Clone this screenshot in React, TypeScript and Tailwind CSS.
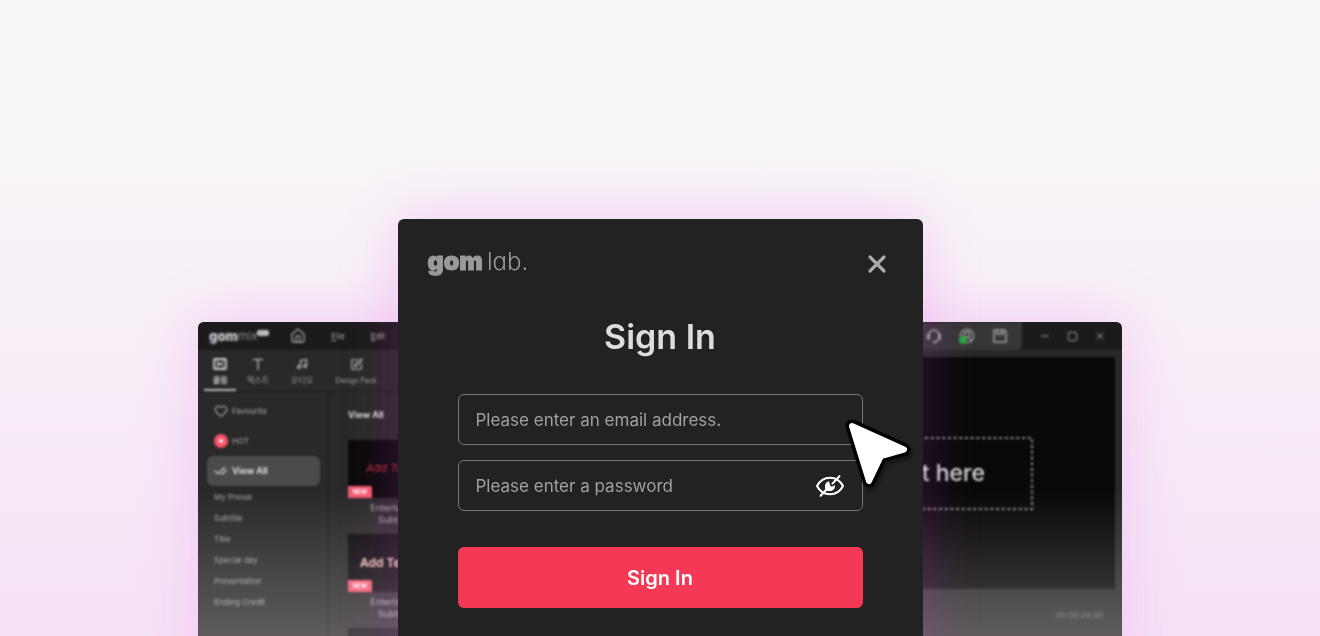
import React from "react";
import { Home, Heart, Music, Minus, Square, X, CheckCheck, SquarePen, CircleUserRound } from "lucide-react";

const categories = ["My Preset", "Subtitle", "Title", "Special day", "Presentation", "Ending Credit"];

function PlayFrameIcon() {
  return (
    <svg viewBox="0 0 14 12" className="h-3 w-3.5" fill="none" stroke="currentColor" strokeWidth="1.8" aria-hidden="true">
      <rect x="1" y="1" width="12" height="10" rx="1" />
      <path d="M4 1v10M10 1v10" strokeWidth="1" />
      <path d="M5.4 3.400v5.200L9.300 6z" fill="currentColor" stroke="none" />
    </svg>
  );
}

function TitleIcon() {
  return (
    <svg viewBox="0 0 14 12" className="h-3 w-3.5" fill="none" stroke="currentColor" strokeWidth="1.6" aria-hidden="true">
      <path d="M2 1.500h10M7 1.500V12" />
    </svg>
  );
}

function SupportIcon() {
  return (
    <svg viewBox="0 0 16 16" className="size-4" fill="none" stroke="currentColor" strokeWidth="1.5" strokeLinecap="round" aria-hidden="true">
      <path d="M3 7a5 5 0 0 1 10 0M13 10a5 5 0 0 1-4.500 4" />
      <path d="M2.500 6.800v3.400M13.500 6.800v3.400" strokeWidth="3" />
      <path d="M7.500 14.200h1.500" strokeWidth="2" />
    </svg>
  );
}

function SaveIcon() {
  return (
    <svg viewBox="0 0 16 16" className="size-4" fill="none" stroke="currentColor" strokeWidth="1.5" strokeLinejoin="round" aria-hidden="true">
      <path d="M2 2h10.500L14 3.500V14H2zM5 2v4h6V2M9 3.500v1" />
    </svg>
  );
}

function EyeOffIcon() {
  return (
    <svg viewBox="0 0 30 24" className="h-6 w-[30px]" fill="none" stroke="#fff" strokeWidth="2.100" strokeLinecap="round" strokeLinejoin="round" aria-hidden="true">
      <path d="M2 12C4.800 6.600 9.300 3.700 15 3.700c5.700 0 10.200 2.900 13 8.300C25.200 17.400 20.700 20.300 15 20.300 9.300 20.300 4.800 17.400 2 12z" />
      <path d="M20.500 7.300 16 12" stroke="#222" strokeWidth="5" strokeLinecap="butt" />
      <path d="M14 7.300a5 5 0 0 0-3.900 6.200l.300 3.200 3.200.200A5 5 0 0 0 19.900 11.200l-3.400 1.600-1.400-1.500z" fill="#fff" stroke="none" />
      <path d="M24.400 2.200 17.400 9.600M11.200 15.800 5.600 21.800" />
    </svg>
  );
}

function Pointer() {
  return (
    <svg viewBox="0 0 70 76" className="pointer-events-none absolute top-[22px] -right-[50px] z-10 h-[76px] w-[70px] drop-shadow-[2px_4px_1px_rgba(0,0,0,0.3)]" strokeLinejoin="round" aria-hidden="true">
      <path d="M9 10 61 33.500 38 40 26 65z" fill="#000" stroke="#000" strokeWidth="13" />
      <path d="M9 10 61 33.500 38 40 26 65z" fill="#fff" stroke="#fff" strokeWidth="6" />
    </svg>
  );
}

function Clip({ caption, className }: { caption: string; className: string }) {
  return (
    <figure className="w-[104px]">
      <div className="flex h-[58px] flex-col justify-between bg-[#0b0a0b]">
        <span className={className}>{caption}</span>
        <span className="w-6 rounded-tr-xs bg-[#f45b70] text-center text-[6px] leading-3 font-bold text-white">NEW</span>
      </div>
      <figcaption className="pt-1 text-center text-[9px] leading-3 text-[#aaa]">
        Entertainment<br />Subtitle 01
      </figcaption>
    </figure>
  );
}

function Editor() {
  const tab = "flex flex-col items-center gap-1 leading-3";
  return (
    <section aria-label="GOM Mix" className="relative col-start-1 row-start-1 mt-[103px] flex min-h-[600px] w-full max-w-[924px] flex-col overflow-hidden rounded-md bg-[#292929] text-[#a3a3a3] shadow-[0_0_60px_rgba(236,110,236,0.28)]">
      <div className="flex flex-1 flex-col blur-[0.8px]">
        <header className="flex h-7 shrink-0 items-center bg-[#1b1b1b] text-[8px]">
          <div className="flex w-[92px] items-start pl-[11px] leading-4">
            <span className="text-[13px] leading-6 font-black text-[#c0c0c0]">gom</span>
            <span className="text-[12px] leading-6 font-light">mix</span>
            <span className="mt-1.5 h-1.5 w-3 rounded-xs bg-[#bbb]" />
          </div>
          <button aria-label="Home" className="mr-6"><Home size={16} strokeWidth={2} /></button>
          <nav className="flex gap-6">
            <button className="w-4"><u>F</u>ile</button>
            <button className="w-4"><u>E</u>dit</button>
          </nav>
          <div className="ml-auto flex h-full w-60 items-center justify-end gap-[17px] rounded-br-md bg-[#363636] pr-3.5">
            <button aria-label="Support"><SupportIcon /></button>
            <button aria-label="Account" className="relative">
              <CircleUserRound size={16} />
              <span className="absolute bottom-0 left-0 size-2 rounded-full bg-[#27a644]" />
            </button>
            <button aria-label="Save"><SaveIcon /></button>
          </div>
          <div className="flex w-[100px] items-center justify-center gap-4">
            <button aria-label="Minimize"><Minus size={12} /></button>
            <button aria-label="Maximize"><Square size={11} /></button>
            <button aria-label="Close window"><X size={12} /></button>
          </div>
        </header>
        <div className="flex flex-1">
          <div className="flex w-1/2 flex-col">
            <nav className="flex h-[42px] shrink-0 border-b border-[#1d1d1d] pt-2 text-[8px]">
              <button className={`${tab} ml-1.5 w-8 border-b-2 border-[#bbb] font-bold text-[#ccc]`}><PlayFrameIcon />클립</button>
              <button className={`${tab} ml-1 w-9`}><TitleIcon />텍스트</button>
              <button className={`${tab} ml-2 w-9`}><Music size={12} strokeWidth={3} />오디오</button>
              <button className={`${tab} ml-1 w-16 text-[7px]`}><SquarePen size={13} strokeWidth={2.5} />Design Pack</button>
            </nav>
            <div className="flex flex-1">
              <aside className="flex w-[131px] shrink-0 flex-col border-r border-[#1d1d1d] pt-1 pr-2 pl-[9px] text-[8px]">
                <button className="flex h-[30px] items-center gap-1 pl-[7px]"><Heart size={14} />Favourite</button>
                <button className="flex h-[30px] items-center gap-1 pl-[7px]">
                  <span className="flex size-3.5 items-center justify-center rounded-full bg-[#fa5268]"><span className="size-1 rounded-full bg-white" /></span>
                  HOT
                </button>
                <button className="flex h-[30px] items-center gap-1 rounded-md bg-[#4d4a4d] pl-[7px] text-[9px] font-bold text-[#ddd]"><CheckCheck size={14} />View All</button>
                {categories.map((name) => (
                  <button key={name} className="h-[21px] pl-[7px] text-left">{name}</button>
                ))}
              </aside>
              <div className="flex-1 pl-[19px]">
                <h2 className="pt-4 pb-[18px] text-[9px] leading-[14px] font-bold text-[#ddd]">View All</h2>
                <div className="flex flex-col gap-2">
                  <Clip caption="Add Text" className="pt-5 pl-[18px] text-[11px] italic text-[#b82a3c]" />
                  <Clip caption="Add Text" className="pt-5 pl-3 text-[12px] font-semibold text-[#ffd0c4]" />
                  <div className="h-[58px] w-[104px] bg-[#0b0a0b]" />
                </div>
              </div>
            </div>
          </div>
          <div className="flex w-1/2 flex-col px-[7px] pt-[7px]">
            <div className="flex h-[232px] items-center justify-end bg-[#090909] pr-[82px]">
              <div className="relative flex h-[73px] w-60 items-center justify-end pr-12 text-[23px] font-medium text-[#d8d8d8]">
                <svg className="absolute inset-0 size-full" aria-hidden="true">
                  <rect x="1" y="1" width="238" height="71" fill="none" stroke="#8a8a8a" strokeWidth="2" strokeDasharray="3 2.7" />
                </svg>
                Text here
              </div>
            </div>
            <p className="pt-5 pr-3 text-right text-[8px] leading-3 text-[#777]">00:00:24;00</p>
          </div>
        </div>
      </div>
      <div className="pointer-events-none absolute inset-x-0 top-[167px] h-[150px] bg-linear-to-b from-[#fff0fa]/0 to-[#fff0fa]/26" />
    </section>
  );
}

function SignInDialog() {
  const field = "h-[51px] w-full rounded-md border border-[#777] bg-[#222] px-[17px] text-[17px] text-white outline-none placeholder:text-[#a0a0a0]";
  return (
    <section role="dialog" aria-labelledby="sign-in-title" className="relative z-10 col-start-1 row-start-1 min-h-[600px] w-full max-w-[525px] rounded-md bg-[#222] shadow-[0_0_58px_rgba(225,60,230,0.21)]">
      <header className="flex items-center justify-between px-[30px] pt-[27px]">
        <a href="#" className="flex h-9 items-center gap-1 pb-1 text-[25px] text-[#999]" aria-label="gom lab.">
          <span className="font-black [-webkit-text-stroke:1px_#999]">gom</span>
          <span className="text-[24px] font-light [font-feature-settings:'cv11']">lab.</span>
        </a>
        <button aria-label="Close" className="flex w-[31px] justify-center text-[#aaa]"><X size={28} strokeWidth={2.75} /></button>
      </header>
      <form className="flex flex-col px-[60px]">
        <h1 id="sign-in-title" className="pt-[35px] pb-[37px] text-center text-[34px] leading-10 font-semibold text-[#ddd]">Sign In</h1>
        <div className="relative">
          <input type="email" aria-label="Email address" placeholder="Please enter an email address." className={field} />
          <Pointer />
        </div>
        <div className="relative mt-[15px]">
          <input type="password" aria-label="Password" placeholder="Please enter a password" className={field} />
          <button type="button" aria-label="Show password" className="absolute inset-y-0 right-[18px] flex items-center"><EyeOffIcon /></button>
        </div>
        <button type="submit" className="mt-9 h-[61px] rounded-md bg-[#f43856] text-[20px] font-semibold text-white">Sign In</button>
      </form>
    </section>
  );
}

export default function App() {
  return (
    <main className="h-screen overflow-hidden bg-linear-to-b from-[#f8f8f8] from-10% to-[#f6e3f6] pt-[219px] font-[Inter,'Noto_Sans_CJK_KR',sans-serif]">
      <div className="grid items-start justify-items-center">
        <Editor />
        <SignInDialog />
      </div>
    </main>
  );
}
